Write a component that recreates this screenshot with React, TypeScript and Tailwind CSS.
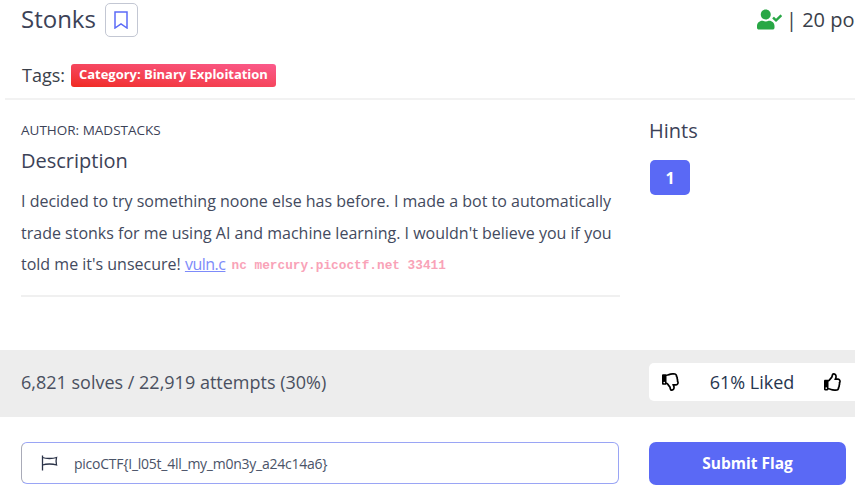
import { FaUserCheck, FaRegThumbsUp, FaRegThumbsDown } from "react-icons/fa"

function Bookmark() {
    return (
        <svg width="14" height="18" viewBox="0 0 14 18" fill="none" stroke="#5c6bf7" strokeWidth="1.5">
            <path d="M1 1h12v16l-6-4-6 4z" />
        </svg>
    )
}

function Flag() {
    return (
        <svg width="17" height="16" viewBox="0 0 17 16" fill="none" stroke="#2b3348" strokeWidth="1.3">
            <path d="M1.5 0.5v15" />
            <path d="M1.5 2.5c2 0.8 4 1 7 1s5-0.3 7-1c-0.6 2.5-0.6 5 0 7.5-2-0.7-4-1-7-1s-5 0.3-7 1" />
        </svg>
    )
}

function App() {
    return (
        <div className="w-[855px] h-[496px] overflow-hidden bg-white text-[#3c4257] font-['Open_Sans',sans-serif]">
            {/* Header */}
            <div className="flex items-start justify-between pl-[21px] pt-[3px] h-[58px]">
                <div className="flex items-center gap-[9px]">
                    <h1 className="text-[24px] leading-[30px] -mt-[3px]">Stonks</h1>
                    <button className="w-[33px] h-[34px] flex items-center justify-center border border-[#c3c7d3] rounded-[5px] bg-white">
                        <Bookmark />
                    </button>
                </div>
                <div className="flex items-center w-[98px] pt-[3px] shrink-0 whitespace-nowrap text-[20px] leading-[28px] text-[#3a3f4a]">
                    <FaUserCheck className="text-[#28a745] text-[21px] shrink-0 mr-[4px] -mt-[2px]" style={{ width: 25 }} />
                    <span>| 20 points</span>
                </div>
            </div>

            {/* Tags */}
            <div className="flex items-center gap-[6px] pl-[22px] h-[34px] text-[18px] text-[#3a3f4a]">
                <span>Tags:</span>
                <span className="px-[8px] h-[23px] flex items-center rounded-[3px] text-[13px] tracking-[-0.03px] font-bold text-white bg-gradient-to-tr from-[#f0281c] to-[#fb5a8c]">
                    Category: Binary Exploitation
                </span>
            </div>

            <div className="ml-[5px] mt-[6px] h-[2px] bg-[#f2f2f2]" />

            {/* Body */}
            <div className="flex h-[250px]">
                <div className="w-[620px] pl-[21px] pt-[21px] shrink-0">
                    <p className="text-[13.5px] leading-[18px]">AUTHOR: MADSTACKS</p>
                    <h2 className="mt-[8px] text-[20px] leading-[28px]">Description</h2>
                    <p className="mt-[11px] text-[16px] leading-[31.5px] text-[#434a5e]">
                        I decided to try something noone else has before. I made a bot to automatically trade stonks for me using AI and machine learning. I wouldn't believe you if you told me it's unsecure!{" "}
                        <a className="text-[#7d8bfa] underline tracking-[-0.5px]">vuln.c</a>{" "}
                        <code className="ml-[2px] text-[12.75px] font-bold font-['Liberation_Mono',monospace] text-[#f9a3b8] align-[1px]">nc mercury.picoctf.net 33411</code>
                    </p>
                    <div className="mt-[13px] h-[2px] bg-[#f0f0f0]" />
                </div>
                <div className="pl-[29px] pt-[17px]">
                    <h2 className="text-[20px] leading-[28px]">Hints</h2>
                    <button className="mt-[15px] ml-px w-[40px] h-[35px] rounded-[5px] bg-[#5a69f5] text-white font-bold text-[16px]">1</button>
                </div>
            </div>

            {/* Stats */}
            <div className="flex items-center h-[67px] bg-[#ededed]">
                <p className="w-[649px] pl-[21px] shrink-0 -mt-[3px] text-[18px] text-[#4a5060]">6,821 solves / 22,919 attempts (30%)</p>
                <div className="flex items-center justify-between w-[206px] h-[38px] -mt-[3px] pl-[13px] pr-[13px] rounded-l-[5px] bg-white">
                    <FaRegThumbsDown className="text-[18px] text-black" />
                    <span className="text-[18px] text-[#27364f]">61% Liked</span>
                    <FaRegThumbsUp className="text-[18px] text-black" />
                </div>
            </div>

            {/* Flag form */}
            <div className="flex items-start pt-[25px]">
                <div className="ml-[21px] w-[598px] h-[42px] flex items-center pl-[19px] rounded-[6px] border border-[#9aa5f5] border-l-[#a9abb8]">
                    <Flag />
                    <span className="ml-[16px] text-[14px] tracking-[-0.25px] text-[#4a5368]">picoCTF&#123;I_l05t_4ll_my_m0n3y_a24c14a6&#125;</span>
                </div>
                <button className="ml-[30px] w-[197px] h-[43px] rounded-[7px] bg-[#5a69f5] text-white font-bold text-[15.5px]">Submit Flag</button>
            </div>
        </div>
    )
}

export default App
